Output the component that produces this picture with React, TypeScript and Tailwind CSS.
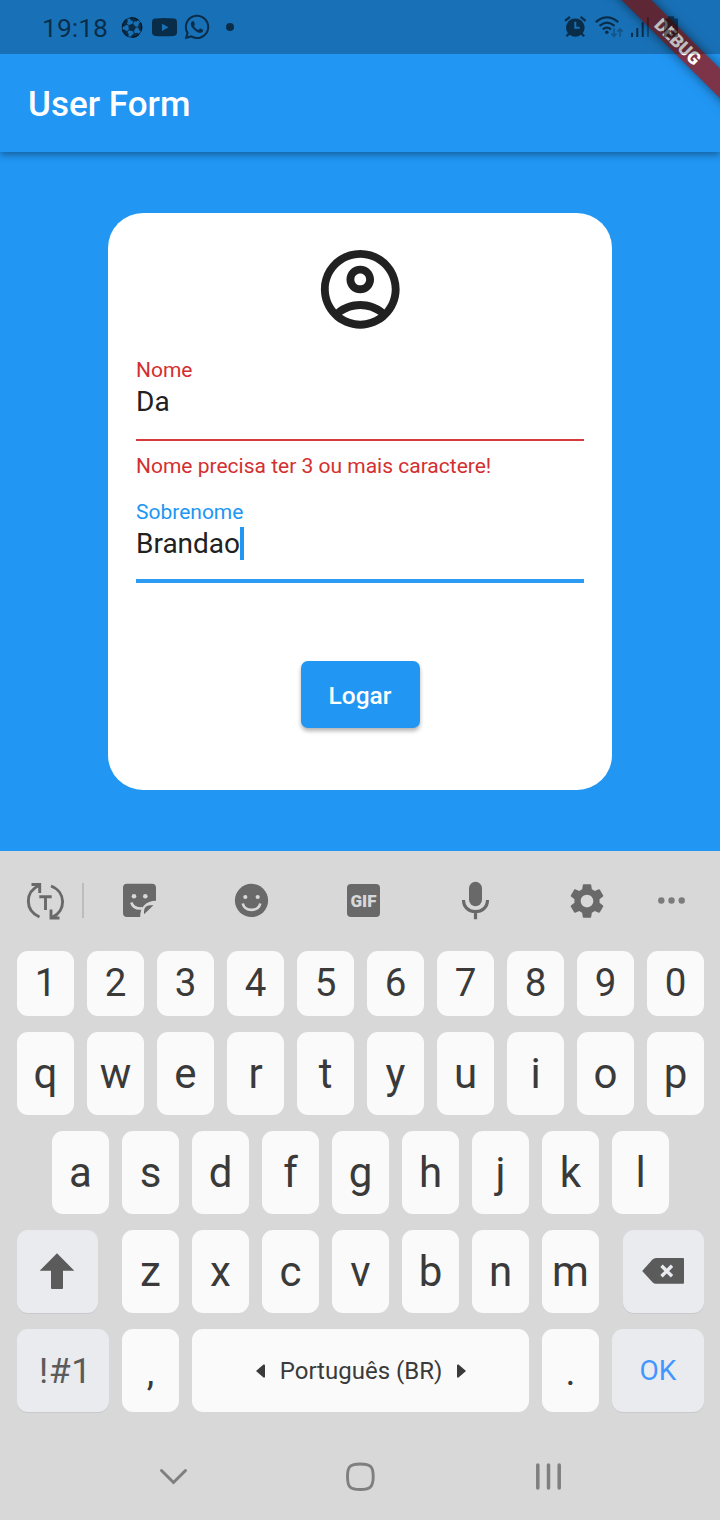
import React from "react";
import { FaWhatsapp } from "react-icons/fa";
import { MdSettings } from "react-icons/md";

function SoccerBall() {
  return (
    <svg className="ml-[12px] mt-[15px]" width="24" height="24" viewBox="-12 -12.500 24 24" fill="currentColor">
      <circle r="9.800" fill="none" stroke="currentColor" strokeWidth="1" />
      <g transform="rotate(14)">
        <path d="M0-4.200L4-1.300 2.500 3.400H-2.500L-4-1.300Z" />
        {[0, 72, 144, 216, 288].map((angle) => (
          <g key={angle} transform={`rotate(${angle})`}>
            <path d="M-4.500-9.300A10.300 10.300 0 0 1 4.500-9.300L3.300-6.900 0-6.100-3.300-6.900Z" />
            <path d="M0-4V-6.500" stroke="currentColor" strokeWidth=".9" />
          </g>
        ))}
      </g>
    </svg>
  );
}

function StatusBar() {
  return (
    <div className="absolute inset-x-0 top-0 z-20 flex h-[54px] items-start bg-black/25 text-black/60">
      <span className="ml-[42px] mt-[12px] w-[66px] text-[26.500px] leading-[31px]">19:18</span>
      <SoccerBall />
      <svg className="ml-[7px] mt-[15px]" width="27" height="24" viewBox="0 0 27 24" fill="currentColor">
        <path
          fillRule="evenodd"
          d="M4 3.600Q13.500 2.500 23 3.600Q26 3.900 26 7.300V17.300Q26 20.600 23 20.900Q13.500 21.800 4 20.900Q1 20.600 1 17.300V7.300Q1 3.900 4 3.600ZM11 8.700V16L17.500 12.300Z"
        />
      </svg>
      <FaWhatsapp className="ml-[5px] mt-[13px]" size={28} />
      <span className="ml-[15px] mt-[23px] size-[8px] rounded-full bg-current" />
      <svg className="ml-auto mr-[32px] mt-[12px]" width="128" height="30" viewBox="560 11.700 128 30" fill="currentColor">
        <path
          fillRule="evenodd"
          d="M575.300 18.200a9.200 9.200 0 0 1 7.400 14.700l2.200 2.300-1.500 1.500-2.400-2.300a9.300 9.300 0 0 1-11.400 0l-2.400 2.300-1.500-1.500 2.200-2.300a9.200 9.200 0 0 1 7.400-14.700ZM574.300 21.500V28.500h5.400v-2h-3.400V21.500Z"
        />
        <path d="M565 20.500l5-4M585.600 20.500l-5-4" stroke="currentColor" strokeWidth="2.200" fill="none" />
        <g fill="none" stroke="currentColor" strokeWidth="2.200">
          <path d="M595.800 21.800Q607 12.400 618.200 21.800" />
          <path d="M599.500 25.600Q607 19 614.500 25.600" />
          <path d="M602.800 29Q607 25.500 611 29" />
        </g>
        <circle cx="606.800" cy="32" r="1.800" />
        <path
          d="M614 28v8M611.500 33.300l2.500 2.700 2.500-2.700M620 36.500v-8M617.300 31.300l2.700-2.700 2.700 2.700"
          stroke="currentColor"
          strokeWidth="1.700"
          fill="none"
          opacity=".4"
        />
        <path d="M631 32.500h2v4.300h-2zM636.300 27.700h2v9.100h-2zM641.700 22h2v14.800h-2z" />
        <path d="M647 17h2v19.800h-2z" opacity=".5" />
        <path
          fillRule="evenodd"
          opacity=".8"
          d="M668 16h6v2.300h3q1 0 1 1V36q0 1-1 1h-12q-1 0-1-1V19.300q0-1 1-1h3ZM673 24L667.500 29.500h2.600v5l5-6.500h-2.400Z"
        />
      </svg>
    </div>
  );
}

function DebugBanner() {
  return (
    <div className="pointer-events-none absolute right-0 top-0 z-10 size-[160px] overflow-hidden">
      <div className="absolute left-[18px] top-[31px] flex h-[21px] w-[200px] rotate-45 items-center justify-center bg-[#7e3448] text-[17.850px] font-black leading-[21px] text-white shadow-[0_0_11px_rgba(0,0,0,0.5)]">
        DEBUG
      </div>
    </div>
  );
}

function UserForm() {
  return (
    <main className="flex h-[699px] justify-center pt-[61.400px]">
      <form className="flex h-[576.200px] w-[504px] flex-col rounded-[35px] bg-white px-[28px] text-[#212121]">
        <svg className="ml-[176.500px] mt-[29px]" width="94.500" height="94.500" viewBox="0 0 24 24" fill="#212121">
          <path d="M12 2C6.480 2 2 6.480 2 12s4.480 10 10 10 10-4.480 10-10S17.520 2 12 2zM7.350 18.500C8.660 17.560 10.260 17 12 17s3.340.560 4.650 1.500C15.340 19.440 13.740 20 12 20s-3.340-.560-4.650-1.500zm10.790-1.380C16.450 15.800 14.320 15 12 15s-4.450.800-6.140 2.120C4.700 15.730 4 13.950 4 12c0-4.420 3.580-8 8-8s8 3.580 8 8c0 1.950-.700 3.730-1.860 5.120zM12 6c-1.930 0-3.500 1.570-3.500 3.500S10.070 13 12 13s3.500-1.570 3.500-3.500S13.930 6 12 6zm0 5c-.830 0-1.500-.670-1.500-1.500S11.170 8 12 8s1.500.670 1.500 1.500S12.830 11 12 11z" />
        </svg>
        <label className="mt-[21.100px] h-[24px] text-[21px] leading-[24px] text-[#d32f2f]">Nome</label>
        <div className="mt-[4px] h-[32px] text-[28px] leading-[32px]">Da</div>
        <div className="mt-[21px] h-[2px] bg-[#d32f2f]/95" />
        <p className="mt-[13px] h-[24px] text-[21px] leading-[24px] text-[#d32f2f]">
          Nome precisa ter 3 ou mais caractere!
        </p>
        <label className="mt-[22px] h-[24px] text-[21px] leading-[24px] text-[#2196f3]">Sobrenome</label>
        <div className="mt-[3px] flex h-[33px] text-[28px] leading-[33px]">
          <span className="w-[104px]">Brandao</span>
          <span className="h-[33px] w-[3.500px] bg-[#2196f3]" />
        </div>
        <div className="mt-[19px] h-[4px] bg-[#2196f3]/95" />
        <button
          type="button"
          className="mt-[78.500px] h-[66.500px] w-[119px] self-center rounded-[7px] bg-[#2196f3] pt-[2px] text-[24.500px] font-medium leading-[28px] text-white shadow-[0_3px_4px_rgba(0,0,0,0.3)]"
        >
          Logar
        </button>
      </form>
    </main>
  );
}

function Key({ label, digit = false, low = false }: { label: string; digit?: boolean; low?: boolean }) {
  return (
    <div
      className={
        digit
          ? "flex h-[65px] w-[57px] shrink-0 items-center justify-center rounded-[11px] bg-[#fafafa] pb-[2px] text-[38.500px] leading-[45px] text-[#3a3a3a]"
          : "flex h-[83px] w-[57px] shrink-0 items-center justify-center rounded-[11px] bg-[#fafafa] text-[42px] leading-[49px] text-[#3a3a3a]"
      }
    >
      <span className={low ? "pt-[3px] text-[38px]" : ""}>{label}</span>
    </div>
  );
}

function Toolbar() {
  return (
    <div className="flex h-[100px] items-center pl-[25px] text-[#696969]">
      <svg width="40" height="40" fill="none" stroke="currentColor" strokeWidth="2.900">
        <path d="M14.500 36C-.300 29.500 -.300 11 14 4.500M6.500 3.500h8.200v8.500M26 5C41.300 11 41.300 30 27 36.500M26 28.500v8.500h8.500" />
        <path d="M14.300 15.700h12.400M20.500 15.700V29" />
      </svg>
      <div className="mb-px ml-[17px] h-[35px] w-[2px] bg-[#bcbcbc]" />
      <svg className="ml-[36px]" width="40" height="40" fill="currentColor">
        <path d="M7 2.700h25a4 4 0 0 1 4 4V19.800C26 20 20 26 20.200 36H7a4 4 0 0 1-4-4V6.700a4 4 0 0 1 4-4Z" />
        <path d="M24 33.300V30Q24.500 24.500 30 24.300H33.500Z" />
        <circle cx="14" cy="15.200" r="2.300" fill="#d8d8d8" />
        <circle cx="25.300" cy="15.200" r="2.300" fill="#d8d8d8" />
        <path d="M11.300 21.500Q13.500 28.500 22.500 27.300" stroke="#d8d8d8" strokeWidth="2.600" fill="none" />
      </svg>
      <svg className="ml-[72px]" width="40" height="40" fill="currentColor">
        <circle cx="19.500" cy="19.400" r="16.600" />
        <circle cx="13.300" cy="16" r="2.100" fill="#d8d8d8" />
        <circle cx="25.700" cy="16" r="2.100" fill="#d8d8d8" />
        <path d="M10.700 22.500C13 31 26 31 28.300 22.500" stroke="#d8d8d8" strokeWidth="2.700" fill="none" />
      </svg>
      <div className="mb-px ml-[75px] mr-[4px] flex size-[33px] items-center justify-center rounded-[4px] bg-[#696969] text-[17px] font-black leading-[20px] text-[#d8d8d8]">
        GIF
      </div>
      <svg className="ml-[72px]" width="40" height="40" fill="currentColor">
        <rect x="13" y="0.800" width="13" height="24.400" rx="6.500" />
        <path d="M7.500 19C7.500 34.500 31.500 34.500 31.500 19M19.500 31v7.300" fill="none" stroke="currentColor" strokeWidth="3.200" />
      </svg>
      <MdSettings className="mb-px ml-[70px]" size={42} />
      <svg className="ml-[44px]" width="40" height="40" fill="#7b7b7b">
        <circle cx="9.300" cy="19.500" r="3.200" />
        <circle cx="19.500" cy="19.500" r="3.200" />
        <circle cx="29.700" cy="19.500" r="3.200" />
      </svg>
    </div>
  );
}

function Keyboard() {
  return (
    <section className="flex h-[669px] flex-col bg-[#d8d8d8]">
      <Toolbar />
      <div className="flex flex-col gap-[16px] pl-[17px] pr-[16px]">
        <div className="flex gap-[13px]">
          {"1234567890".split("").map((k) => (
            <Key key={k} label={k} digit />
          ))}
        </div>
        <div className="flex gap-[13px]">
          {"qwertyuiop".split("").map((k) => (
            <Key key={k} label={k} />
          ))}
        </div>
        <div className="flex gap-[13px] pl-[35px]">
          {"asdfghjkl".split("").map((k) => (
            <Key key={k} label={k} />
          ))}
        </div>
        <div className="flex justify-between">
          <div className="h-[83px] w-[81px] rounded-[11px] bg-[#e9ebef] shadow-[0_1px_0_#c9cacd]">
            <svg width="81" height="83" fill="#5b5b5b">
              <path d="M40 23.300L57.300 40.700H46V58q0 1-1 1H35q-1 0-1-1V40.700H22.700Z" />
            </svg>
          </div>
          <div className="flex gap-[13px]">
            {"zxcvbnm".split("").map((k) => (
              <Key key={k} label={k} />
            ))}
          </div>
          <div className="h-[83px] w-[81px] rounded-[11px] bg-[#e9ebef] shadow-[0_1px_0_#c9cacd]">
            <svg width="81" height="83">
              <path d="M19.200 41L29.500 29.600Q31 28 33 28H60Q61 28 61 29V52.700Q61 53.700 60 53.700H33Q31 53.700 29.500 52.200Z" fill="#5b5b5b" />
              <path d="M38.500 35.800L49 46.300M49 35.800L38.500 46.300" stroke="#e9ebef" strokeWidth="3.400" />
            </svg>
          </div>
        </div>
        <div className="flex gap-[13px]">
          <div className="flex h-[83px] w-[92px] shrink-0 items-center justify-center rounded-[11px] bg-[#e9ebef] pl-[5px] pt-[2px] text-[35.500px] leading-[41px] tracking-[0.600px] text-[#5b5b5b] shadow-[0_1px_0_#c9cacd]">
            !#1
          </div>
          <Key label="," low />
          <div className="flex h-[83px] w-[337px] shrink-0 items-center justify-center gap-[15px] rounded-[11px] bg-[#fafafa] pl-px text-[24px] leading-[28px] text-[#3a3a3a]">
            <svg width="9" height="14" fill="currentColor">
              <path d="M0 7L7.500 .500Q9 0 9 1.500V12.500Q9 14 7.500 13.500Z" />
            </svg>
            <span className="whitespace-nowrap">Português (BR)</span>
            <svg width="9" height="14" fill="currentColor">
              <path d="M9 7L1.500 .500Q0 0 0 1.500V12.500Q0 14 1.500 13.500Z" />
            </svg>
          </div>
          <Key label="." low />
          <div className="flex h-[83px] w-[92px] shrink-0 items-center justify-center rounded-[11px] bg-[#e9ebef] text-[28px] leading-[33px] text-[#4296ff] shadow-[0_1px_0_#c9cacd]">
            OK
          </div>
        </div>
      </div>
      <nav className="mt-[45px] flex pl-[154px]">
        <svg width="40" height="40" fill="none" stroke="#7f7f7f" strokeWidth="3" strokeLinecap="round">
          <path d="M7.500 13.500L19.500 25.500L31.500 13.500" />
        </svg>
        <svg className="ml-[147px]" width="40" height="40" fill="none" stroke="#7f7f7f" strokeWidth="2.900">
          <path d="M6.500 19.500C6.500 9.500 9 7 19.300 7S32.200 9.500 32.200 19.500 29.700 32.500 19.300 32.500 6.500 30 6.500 19.500Z" />
        </svg>
        <svg className="ml-[147px]" width="40" height="40" stroke="#7f7f7f" strokeWidth="3.500" strokeLinecap="round">
          <path d="M9.800 8V31M20.500 8V31M31.200 8V31" />
        </svg>
      </nav>
    </section>
  );
}

export default function App() {
  return (
    <div className="relative h-[1520px] w-[720px] overflow-hidden bg-[#2196f3] font-[Roboto,sans-serif]">
      <StatusBar />
      <DebugBanner />
      <header className="flex h-[152px] items-center bg-[#2196f3] pl-[28px] pt-[57px] text-[35px] font-medium leading-[41px] text-white shadow-[0_3px_7px_rgba(0,0,0,0.35)]">
        <h1>User Form</h1>
      </header>
      <UserForm />
      <Keyboard />
    </div>
  );
}
